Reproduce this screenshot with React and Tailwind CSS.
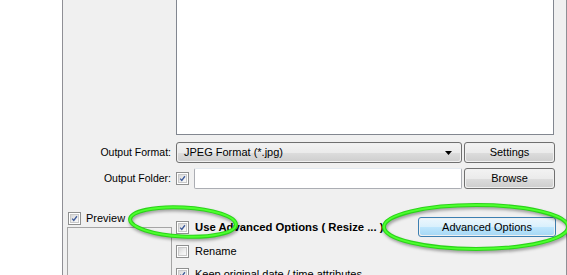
import React from "react";

const font = { fontFamily: '"Liberation Sans", Arial, sans-serif' };

function Check({ checked }) {
  return (
    <div className="w-[13px] h-[13px] shrink-0 border border-[#8e8f8f] bg-white p-px">
      <div className="w-full h-full border border-[#c9c9c9] bg-gradient-to-br from-[#d6d6d6] via-[#ececec] to-[#fafafa] relative">
        {checked && (
          <svg viewBox="0 0 9 9" className="absolute inset-0 w-full h-full">
            <path d="M1.5 4.6 L3.6 7 L7.6 1.6" fill="none" stroke="#3d5a99" strokeWidth="1.7" strokeLinejoin="miter" />
          </svg>
        )}
      </div>
    </div>
  );
}

function Button({ children, className = "" }) {
  return (
    <div className={"rounded-[3px] border border-[#707070] p-px " + className}>
      <div className="w-full h-full rounded-[2px] bg-[linear-gradient(to_bottom,#f2f2f2_0%,#ebebeb_50%,#dddddd_51%,#cfcfcf_100%)] flex items-center justify-center text-[11px] text-black">
        {children}
      </div>
    </div>
  );
}

export default function App() {
  return (
    <div className="w-[567px] h-[275px] overflow-hidden bg-white flex relative" style={font}>
      <div className="w-[62px] shrink-0 bg-white" />
      <div className="flex-1 bg-[#f0f0f0] border-l border-r border-[#8f8f95] flex flex-col text-[10.5px] text-black">
        {/* white list box */}
        <div className="flex">
          <div className="w-[113px] shrink-0" />
          <div className="w-[378px] h-[135px] bg-white border-l border-r border-b border-[#828790]" />
        </div>
        {/* output format row */}
        <div className="flex mt-[7px] h-[21px] items-center">
          <div className="w-[113px] shrink-0 text-right pr-[5px]">Output Format:</div>
          <div className="w-[286px] h-[21px] rounded-[3px] border border-[#707070] p-px">
            <div className="w-full h-full rounded-[2px] bg-[linear-gradient(to_bottom,#f2f2f2_0%,#ebebeb_50%,#dddddd_51%,#cfcfcf_100%)] flex items-center pl-[6px] pr-[8px] text-[11px]">
              <span className="flex-1">JPEG Format (*.jpg)</span>
              <svg width="7" height="4" viewBox="0 0 7 4"><path d="M0 0 H7 L3.5 4 Z" fill="#000" /></svg>
            </div>
          </div>
          <Button className="ml-[2px] w-[91px] h-[21px]">Settings</Button>
        </div>
        {/* output folder row */}
        <div className="flex mt-[5px] h-[21px] items-center">
          <div className="w-[113px] shrink-0 text-right pr-[5px]">Output Folder:</div>
          <Check checked />
          <div className="ml-[5px] w-[268px] h-[21px] bg-white border border-[#abadb3] border-t-[#e3e9ef] rounded-[2px]" />
          <Button className="ml-[2px] w-[91px] h-[21px]">Browse</Button>
        </div>
        {/* bottom section */}
        <div className="flex flex-1">
          <div className="w-[113px] shrink-0 pl-[4px] flex flex-col">
            <div className="mt-[23px] flex items-center h-[13px] pl-px">
              <Check checked />
              <span className="ml-[5px] text-[11px]">Preview</span>
            </div>
            <div className="mt-[2px] w-[105px] flex-1 border border-[#a5a5a5] border-b-0" />
          </div>
          <div className="flex flex-col">
            <div className="mt-[28px] flex items-center h-[20px]">
              <Check checked />
              <span className="ml-[6px] font-bold text-[11.3px] w-[223px]">Use Advanced Options ( Resize ... )</span>
              <div className="w-[138px] h-[20px] rounded-[3px] border border-[#3c7fb1] p-px">
                <div className="w-full h-full rounded-[2px] bg-[linear-gradient(to_bottom,#eaf6fd_0%,#d9f0fc_50%,#bee6fd_51%,#a7d9f5_100%)] flex items-center justify-center text-[11px]">
                  Advanced Options
                </div>
              </div>
            </div>
            <div className="mt-[8px] flex items-center h-[13px]">
              <Check />
              <span className="ml-[6px] text-[11px]">Rename</span>
            </div>
            <div className="mt-[10px] flex items-center h-[13px]">
              <Check checked />
              <span className="ml-[6px] text-[11px]">Keep original date / time attributes</span>
            </div>
          </div>
        </div>
      </div>

      {/* green highlight ellipses */}
      <svg className="absolute inset-0 pointer-events-none" width="567" height="275" viewBox="0 0 567 275">
        <defs>
          <filter id="sh" x="-20%" y="-50%" width="140%" height="200%">
            <feGaussianBlur stdDeviation="1.5" />
          </filter>
        </defs>
        <g transform="rotate(3 183 222)">
          <ellipse cx="184" cy="224" rx="53" ry="14.5" fill="none" stroke="rgba(0,0,0,0.35)" strokeWidth="4" filter="url(#sh)" />
          <ellipse cx="183" cy="222" rx="53" ry="14.5" fill="none" stroke="#2bd41a" strokeWidth="4" />
          <ellipse cx="183" cy="222" rx="53" ry="14.5" fill="none" stroke="#4dff2e" strokeWidth="1.8" />
        </g>
        <ellipse cx="477" cy="229" rx="92" ry="22" fill="none" stroke="rgba(0,0,0,0.35)" strokeWidth="4" filter="url(#sh)" />
        <ellipse cx="476" cy="227" rx="92" ry="22" fill="none" stroke="#2bd41a" strokeWidth="4" />
        <ellipse cx="476" cy="227" rx="92" ry="22" fill="none" stroke="#4dff2e" strokeWidth="1.8" />
      </svg>
    </div>
  );
}
